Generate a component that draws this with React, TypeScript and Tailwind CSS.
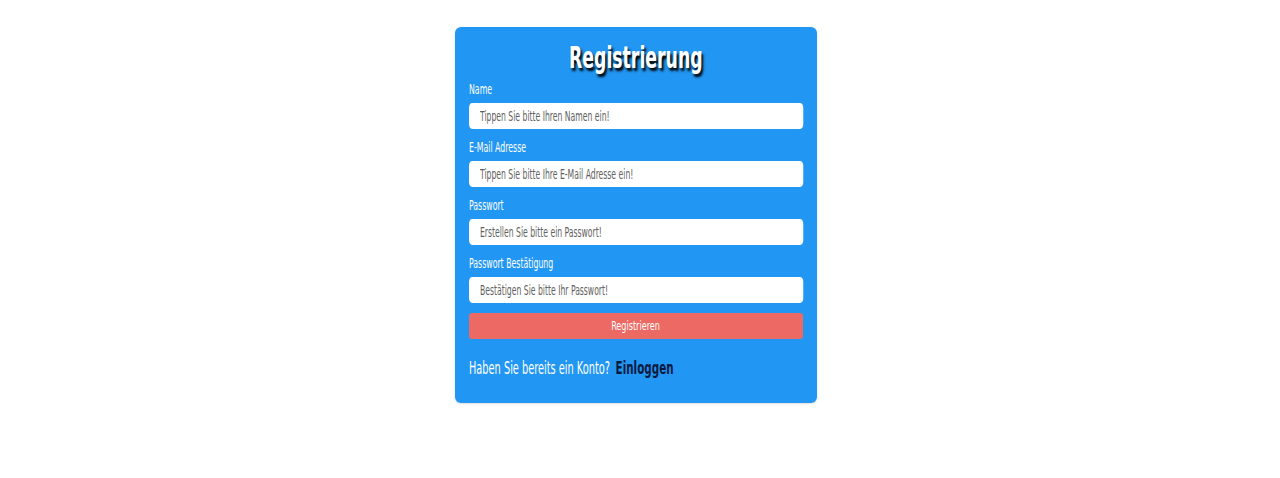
const font = "font-['DejaVu_Sans_Condensed','DejaVu_Sans',sans-serif] [font-stretch:condensed]";

const fields = [
  { label: "Name", placeholder: "Tippen Sie bitte Ihren Namen ein!", type: "text" },
  { label: "E-Mail Adresse", placeholder: "Tippen Sie bitte Ihre E-Mail Adresse ein!", type: "email" },
  { label: "Passwort", placeholder: "Erstellen Sie bitte ein Passwort!", type: "password" },
  { label: "Passwort Bestätigung", placeholder: "Bestätigen Sie bitte Ihr Passwort!", type: "password" },
];

export default function App() {
  return (
    <div className={`flex min-h-[478px] w-full justify-center bg-white pr-[8px] pt-[27px] ${font}`}>
      <form className="flex h-[376px] w-[362px] flex-col rounded-md bg-[#2196f3] px-[14px] pt-[8px] shadow-sm">
        <h1 className="h-[45px] text-center text-[31px] font-bold leading-[45px] text-white">
          <span className="inline-block scale-x-[0.62] [text-shadow:3px_3px_3px_#000]">Registrierung</span>
        </h1>
        {fields.map((field, i) => (
          <div key={field.label} className={i > 0 ? "mt-[9px]" : ""}>
            <label className="block h-[18px] text-[14px] leading-[18px] text-white">
              <span className="inline-block origin-left scale-x-[0.62]">{field.label}</span>
            </label>
            <div className="mt-[5px] h-[26px] w-full">
              <input
                type={field.type}
                placeholder={field.placeholder}
                className="block h-[26px] w-[548px] origin-left scale-x-[0.61] rounded-[5px] bg-white px-[18px] text-[14px] text-gray-700 outline-none placeholder:text-[#5f5f5f]"
              />
            </div>
          </div>
        ))}
        <button
          type="button"
          className="mt-[10px] h-[26px] w-full rounded-[3px] bg-[#ec6a63] text-[12px] text-white"
        >
          <span className="inline-block scale-x-[0.75]">Registrieren</span>
        </button>
        <p className="mt-[18px] flex items-baseline text-[17px] leading-[22px] text-white">
          <span className="inline-block origin-left scale-x-[0.64]">
            Haben Sie bereits ein Konto?{" "}
            <a href="#" className="ml-[4px] text-[18px] font-semibold text-[#0a1a3f]">Einloggen</a>
          </span>
        </p>
      </form>
    </div>
  );
}
